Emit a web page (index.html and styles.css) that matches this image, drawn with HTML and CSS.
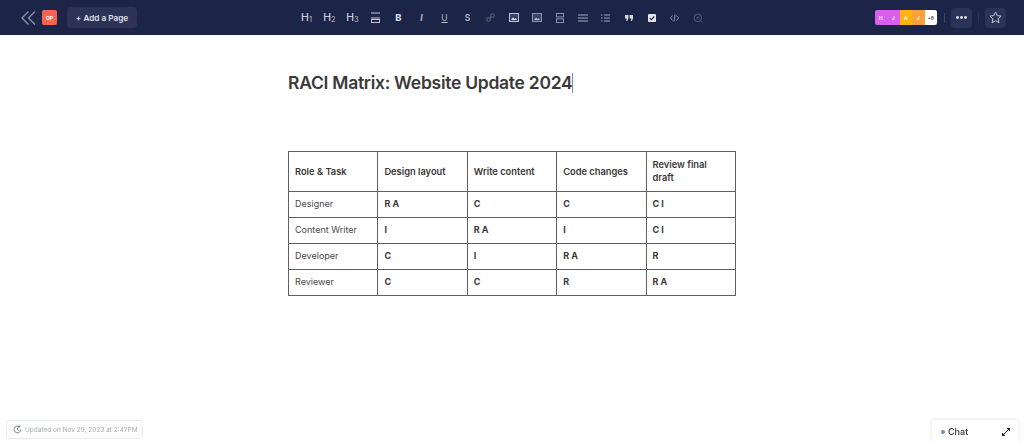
FILE: index.html
```html
<!DOCTYPE html>
<html lang="en">
<head>
	<meta charset="UTF-8">
	<title>RACI Matrix: Website Update 2024</title>
	<link rel="stylesheet" href="styles.css">
</head>
<body>
	<header class="topbar">
		<div class="left">
			<svg class="back" width="15" height="14" viewBox="0 0 15 14" fill="none" stroke="#8d93a8" stroke-width="1.3"><path d="M7.5 .5 1 7l6.500 6.500"/><path d="M14 .5 7.500 7l6.500 6.500"/></svg>
			<span class="logo">OP</span>
			<button class="add">+ Add a Page</button>
		</div>
		<div class="tools">
			<span class="tool head">H<small>1</small></span>
			<span class="tool head">H<small>2</small></span>
			<span class="tool head">H<small>3</small></span>
			<span class="tool"><svg width="9" height="11" viewBox="0 0 9 11" fill="none" stroke="#c3c6d2"><path d="M0 1h9M0 6h9"/><rect x=".5" y="7.500" width="8" height="3"/></svg></span>
			<span class="tool mark bold">B</span>
			<span class="tool mark ital">I</span>
			<span class="tool mark under">U</span>
			<span class="tool mark">S</span>
			<span class="tool"><svg width="9" height="9" viewBox="0 0 9 9" fill="none" stroke="#596078" stroke-width="1.100"><circle cx="2.500" cy="6.500" r="1.800"/><circle cx="6.500" cy="2.500" r="1.800"/><path d="M3.500 5.500l2-2"/></svg></span>
			<span class="tool"><svg width="10" height="9" viewBox="0 0 10 9"><rect x=".5" y=".5" width="9" height="8" fill="#3d4463" stroke="#c3c6d2"/><path d="M2 7l2-2.500 1.500 1.500L6.500 5 8 7z" fill="#e4e5ea"/></svg></span>
			<span class="tool"><svg width="10" height="9" viewBox="0 0 10 9"><rect x=".5" y=".5" width="9" height="8" fill="#3d4463" stroke="#8d93a8"/><path d="M2 7l2-2.500 1.500 1.500L6.500 5 8 7z" fill="#b9bdca"/></svg></span>
			<span class="tool"><svg width="8" height="10" viewBox="0 0 8 10" fill="none" stroke="#8d93a8"><rect x=".5" y=".5" width="7" height="3.500"/><rect x=".5" y="6" width="7" height="3.500"/></svg></span>
			<span class="tool"><svg width="10" height="8" viewBox="0 0 10 8" fill="none" stroke="#a4a9ba"><path d="M0 1h10M0 4h10M0 7h10"/></svg></span>
			<span class="tool"><svg width="9" height="8" viewBox="0 0 9 8" fill="none" stroke="#a4a9ba"><path d="M3 1h6M3 4h6M3 7h6"/><path d="M0 1h1.500M0 4h1.500M0 7h1.500"/></svg></span>
			<span class="tool"><svg width="8" height="6" viewBox="0 0 8 6" fill="#d8dae2"><path d="M0 0h3.400v3.200L2.400 6H1.200l.6-2.600H0zM4.600 0H8v3.200L7 6H5.800l.6-2.600H4.600z"/></svg></span>
			<span class="tool"><svg width="8" height="8" viewBox="0 0 8 8"><rect width="8" height="8" rx="1" fill="#e4e5ea"/><path d="M1.800 4.200l1.500 1.500L6.300 2.500" fill="none" stroke="#1c2447" stroke-width="1.100"/></svg></span>
			<span class="tool"><svg width="9" height="8" viewBox="0 0 9 8" fill="none" stroke="#8d93a8"><path d="M2.500 1.500 .5 4l2 2.500M6.500 1.500l2 2.500-2 2.500M5 .5 4 7.500"/></svg></span>
			<span class="tool"><svg width="10" height="10" viewBox="0 0 10 10" fill="none" stroke="#596078"><circle cx="4.800" cy="4.800" r="3.800"/><path d="M3 4.800h3.600M7.500 7.500l2 2"/></svg></span>
		</div>
		<div class="right">
			<div class="avatars">
				<span class="avatar pink">H</span>
				<span class="avatar pink">J</span>
				<span class="avatar amber">A</span>
				<span class="avatar orange">J</span>
				<span class="avatar more">+8</span>
			</div>
			<i class="rule"></i>
			<button class="square"><svg width="11" height="3" viewBox="0 0 11 3" fill="#e4e5ea"><circle cx="1.500" cy="1.500" r="1.400"/><circle cx="5.500" cy="1.500" r="1.400"/><circle cx="9.500" cy="1.500" r="1.400"/></svg></button>
			<i class="rule dim"></i>
			<button class="square"><svg width="13" height="13" viewBox="0 0 13 13" fill="none" stroke="#c3c6d2"><path d="M6.500 1l1.700 3.600 3.900.5-2.900 2.700.8 3.900-3.500-2-3.500 2 .8-3.900L.900 5.100l3.900-.5z"/></svg></button>
		</div>
	</header>

	<main class="page">
		<h1 class="title">RACI Matrix: Website Update 2024<span class="caret"></span></h1>
		<table class="matrix">
			<tr class="top">
				<th>Role &amp; Task</th>
				<th>Design layout</th>
				<th>Write content</th>
				<th>Code changes</th>
				<th>Review final draft</th>
			</tr>
			<tr><td>Designer</td><td class="val">R A</td><td class="val">C</td><td class="val">C</td><td class="val">C I</td></tr>
			<tr><td>Content Writer</td><td class="val">I</td><td class="val">R A</td><td class="val">I</td><td class="val">C I</td></tr>
			<tr><td>Developer</td><td class="val">C</td><td class="val">I</td><td class="val">R A</td><td class="val">R</td></tr>
			<tr><td>Reviewer</td><td class="val">C</td><td class="val">C</td><td class="val">R</td><td class="val">R A</td></tr>
		</table>
	</main>

	<div class="updated">
		<svg width="9" height="9" viewBox="0 0 9 9" fill="none" stroke="#777c88"><path d="M7.900 4.500A3.400 3.400 0 1 1 6.500 1.700"/><path d="M6.800 .3v1.800H5M4.500 2.800v1.900l1.200.7"/></svg>
		Updated on Nov 29, 2023 at 2:47PM
	</div>
	<div class="chat">
		<span class="dot"></span>Chat
		<svg class="expand" width="8" height="8" viewBox="0 0 8 8" fill="none" stroke="#222"><path d="M1 7l6-6"/><path d="M5 .6h2.400V3M3 7.400H.6V5" stroke-width="1.100"/></svg>
	</div>
</body>
</html>
```

FILE: styles.css
```css
body {
	margin: 0;
	height: 443px;
	overflow: hidden;
	background-color: #ffffff;
	color: #3b3838;
	font-family: Inter, "Liberation Sans", sans-serif;
}
.topbar {
	display: flex;
	align-items: center;
	height: 35px;
	background-color: #1c2447;
}
.left {
	display: flex;
	align-items: center;
	width: 295px;
	padding-left: 21px;
	box-sizing: border-box;
}
.logo {
	display: flex;
	align-items: center;
	justify-content: center;
	width: 15px;
	height: 15px;
	margin-left: 6px;
	border-radius: 2px;
	background-color: #f9634e;
	color: #ffffff;
	font-size: 5px;
	font-weight: 700;
}
.add {
	width: 70px;
	height: 21px;
	margin-left: 10px;
	padding: 0;
	border: 0;
	border-radius: 4px;
	background-color: #2c3356;
	color: #dfe1e8;
	font-family: inherit;
	font-size: 8.200px;
	font-weight: 600;
}
.tools {
	display: flex;
	align-items: center;
}
.tool {
	display: flex;
	align-items: center;
	justify-content: center;
	width: 23px;
	height: 20px;
}
.head {
	color: #e4e5ea;
	font-size: 10.500px;
}
.head small {
	margin-top: 3px;
	font-size: 7.500px;
	color: #b9bdca;
}
.mark {
	color: #b9bdca;
	font-size: 8.500px;
	font-weight: 600;
}
.bold {
	color: #dfe1e8;
	font-size: 9.500px;
	font-weight: 700;
}
.ital {
	font-style: italic;
	font-weight: 700;
}
.under {
	text-decoration: underline;
	font-weight: 400;
}
.right {
	display: flex;
	align-items: center;
	margin-left: auto;
	padding-right: 18px;
}
.avatars {
	display: flex;
	overflow: hidden;
	border-radius: 2px;
}
.avatar {
	display: flex;
	align-items: center;
	justify-content: center;
	width: 12.500px;
	height: 15px;
	color: #ffffff;
	font-size: 5px;
	font-weight: 600;
}
.pink {
	background-color: #d95ff0;
}
.amber {
	background-color: #fdb40e;
}
.orange {
	background-color: #f8a23f;
}
.more {
	background-color: #ffffff;
	color: #555555;
}
.rule {
	width: 1px;
	height: 10px;
	margin: 0 6px 0 7px;
	background-color: #3d4463;
}
.rule.dim {
	margin: 0 6px;
	background-color: #2e3555;
}
.square {
	display: flex;
	align-items: center;
	justify-content: center;
	width: 21px;
	height: 20px;
	padding: 0;
	border: 0;
	border-radius: 4px;
	background-color: #2c3356;
}
.page {
	width: 448px;
	margin: 0 auto;
	padding-top: 36px;
}
.title {
	margin: 0 0 57px;
	font-size: 17.500px;
	line-height: 23px;
	font-weight: 600;
	letter-spacing: -0.270px;
}
.caret {
	display: inline-block;
	width: 1px;
	height: 20px;
	vertical-align: -4px;
	background-color: #7f8ba5;
}
.matrix {
	width: 448px;
	table-layout: fixed;
	border-collapse: collapse;
	font-size: 9px;
	line-height: 13px;
}
.matrix th,
.matrix td {
	height: 26px;
	padding: 0 6px 2px;
	border: 1px solid #5f5f68;
	text-align: left;
	box-sizing: border-box;
}
.matrix .top th {
	height: 40px;
	padding-bottom: 1px;
	font-size: 9.300px;
	font-weight: 600;
}
.matrix td {
	color: #4a4747;
}
.matrix .val {
	font-weight: 700;
	color: #3b3838;
}
.updated {
	position: fixed;
	left: 6px;
	bottom: 4px;
	display: flex;
	align-items: center;
	gap: 3px;
	height: 17px;
	padding: 0 4px 0 6px;
	border: 1px solid #e8eaf0;
	border-radius: 3px;
	color: #a6a9b2;
	font-size: 6.500px;
}
.chat {
	position: fixed;
	right: 6px;
	bottom: 0;
	display: flex;
	align-items: center;
	width: 86px;
	height: 23px;
	box-sizing: border-box;
	padding: 0 8px 0 9px;
	border-radius: 4px 4px 0 0;
	box-shadow: 0 0 4px rgba(0, 0, 0, 0.12);
	background-color: #ffffff;
	color: #333333;
	font-size: 9px;
	font-weight: 500;
}
.dot {
	width: 4px;
	height: 4px;
	margin-right: 3px;
	border-radius: 50%;
	background-color: #6a8fb5;
}
.expand {
	margin-left: auto;
}
```
